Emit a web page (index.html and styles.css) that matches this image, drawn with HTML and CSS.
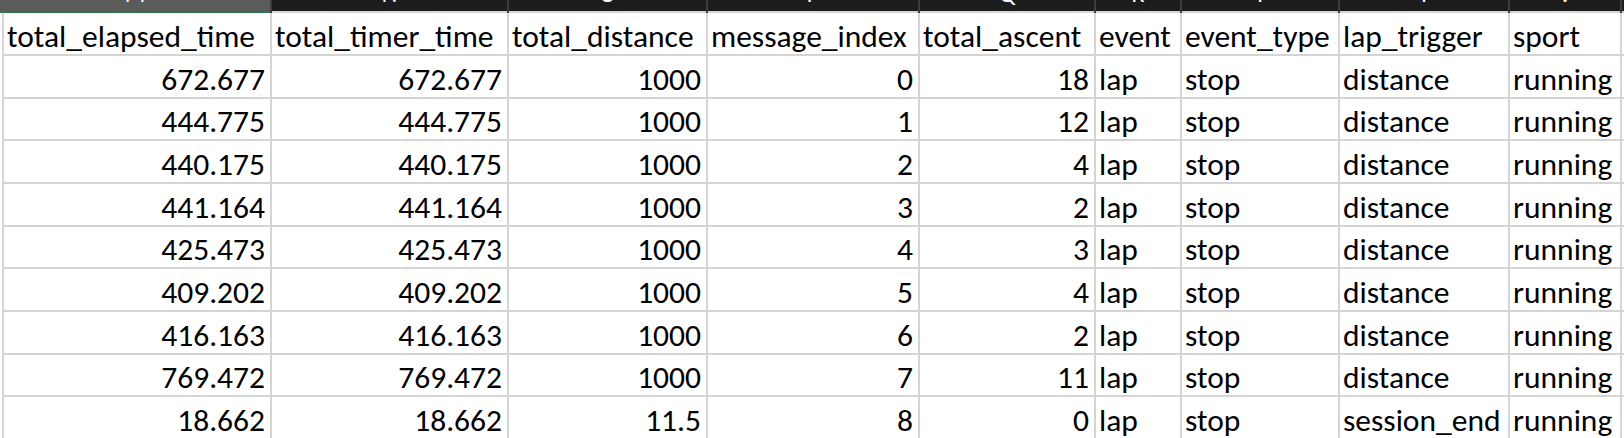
FILE: index.html
```html
<!DOCTYPE html>
<html>
<head>
<meta charset="utf-8">
<link rel="stylesheet" href="styles.css">
</head>
<body>
<div class="bar">
  <div class="bc sel"><span>M</span></div>
  <div class="bc"><span>N</span></div>
  <div class="bc"><span>O</span></div>
  <div class="bc"><span>P</span></div>
  <div class="bc"><span>Q</span></div>
  <div class="bc"><span>R</span></div>
  <div class="bc"><span>T</span></div>
  <div class="bc"><span>I</span></div>
  <div class="bc"><span>V</span></div>
  <div class="bc"></div>
</div>
<div class="sheet">
  <div class="c">total_elapsed_time</div><div class="c">total_timer_time</div><div class="c">total_distance</div><div class="c">message_index</div><div class="c">total_ascent</div><div class="c">event</div><div class="c">event_type</div><div class="c">lap_trigger</div><div class="c">sport</div><div class="c"></div>

  <div class="c n">672.677</div><div class="c n">672.677</div><div class="c n">1000</div><div class="c n">0</div><div class="c n">18</div><div class="c">lap</div><div class="c">stop</div><div class="c">distance</div><div class="c">running</div><div class="c"></div>
  <div class="c n">444.775</div><div class="c n">444.775</div><div class="c n">1000</div><div class="c n">1</div><div class="c n">12</div><div class="c">lap</div><div class="c">stop</div><div class="c">distance</div><div class="c">running</div><div class="c"></div>
  <div class="c n">440.175</div><div class="c n">440.175</div><div class="c n">1000</div><div class="c n">2</div><div class="c n">4</div><div class="c">lap</div><div class="c">stop</div><div class="c">distance</div><div class="c">running</div><div class="c"></div>
  <div class="c n">441.164</div><div class="c n">441.164</div><div class="c n">1000</div><div class="c n">3</div><div class="c n">2</div><div class="c">lap</div><div class="c">stop</div><div class="c">distance</div><div class="c">running</div><div class="c"></div>
  <div class="c n">425.473</div><div class="c n">425.473</div><div class="c n">1000</div><div class="c n">4</div><div class="c n">3</div><div class="c">lap</div><div class="c">stop</div><div class="c">distance</div><div class="c">running</div><div class="c"></div>
  <div class="c n">409.202</div><div class="c n">409.202</div><div class="c n">1000</div><div class="c n">5</div><div class="c n">4</div><div class="c">lap</div><div class="c">stop</div><div class="c">distance</div><div class="c">running</div><div class="c"></div>
  <div class="c n">416.163</div><div class="c n">416.163</div><div class="c n">1000</div><div class="c n">6</div><div class="c n">2</div><div class="c">lap</div><div class="c">stop</div><div class="c">distance</div><div class="c">running</div><div class="c"></div>
  <div class="c n">769.472</div><div class="c n">769.472</div><div class="c n">1000</div><div class="c n">7</div><div class="c n">11</div><div class="c">lap</div><div class="c">stop</div><div class="c">distance</div><div class="c">running</div><div class="c"></div>
  <div class="c n">18.662</div><div class="c n">18.662</div><div class="c n">11.5</div><div class="c n">8</div><div class="c n">0</div><div class="c">lap</div><div class="c">stop</div><div class="c">session_end</div><div class="c">running</div><div class="c"></div>
</div>
</body>
</html>
```
FILE: styles.css
```css
html, body {
  margin: 0;
  padding: 0;
  background: #ffffff;
  overflow: hidden;
}

body {
  font-family: Carlito, Calibri, Lato, "Liberation Sans", sans-serif;
  color: #000000;
}

.bar {
  display: grid;
  grid-template-columns: 270px 235px 197px 210px 174px 84px 156px 168px 110px 1fr;
  column-gap: 2px;
  background: #3c3c3c;
}

.bc {
  height: 11px;
  background: #1c1c1c;
  border-bottom: 2px solid #d4d4d4;
  overflow: hidden;
  display: flex;
  justify-content: center;
  align-items: flex-end;
}

.bc.sel {
  background: #5b5b5b;
  border-bottom-color: #2e7548;
}

.bc span {
  color: #ffffff;
  font-size: 24px;
  line-height: 24px;
  margin-bottom: 3px;
  transform: translateY(-2px);
}

.sheet {
  display: grid;
  grid-template-columns: 266px 235px 197px 210px 174px 84px 156px 168px 110px 1fr;
  grid-template-rows: 41px 41px 40px 41px 41px 40px 41px 41px 40px 41px;
  gap: 2px;
  margin-left: 2px;
  padding-left: 2px;
  padding-bottom: 2px;
  background: #d4d4d4;
}

.c {
  background: #ffffff;
  font-size: 31.5px;
  line-height: 26px;
  padding: 0 5px 5px 3px;
  white-space: nowrap;
  overflow: hidden;
  display: flex;
  align-items: flex-end;
  justify-content: flex-start;
}

.c.n {
  justify-content: flex-end;
}
```
